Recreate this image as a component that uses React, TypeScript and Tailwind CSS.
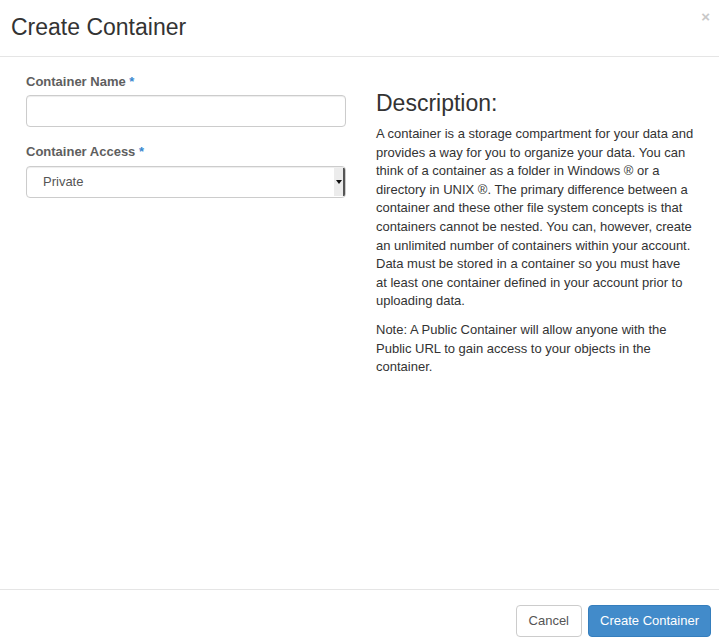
import React from 'react';

const font = { fontFamily: '"Liberation Sans", Arial, sans-serif' };

const App: React.FC = () => {
  return (
    <div className="w-[719px] h-[642px] bg-white flex flex-col text-[#333]" style={font}>
      {/* header */}
      <div className="h-[57px] border-b border-[#e5e5e5] flex items-center justify-between pl-[11px] pr-[9px]">
        <h3 className="text-[23px] leading-none mb-[2px]">Create Container</h3>
        <span className="text-[15px] font-bold text-[#c8c8c8] self-start mt-[9px] leading-none">×</span>
      </div>

      {/* body */}
      <div className="flex-1 flex pl-[26px] pt-[16px]">
        <div className="w-[320px] flex flex-col">
          <label className="text-[13px] font-bold text-[#5e5e5e] leading-[18px] mb-[4px]">
            Container Name <span className="text-[#3a87cf]">*</span>
          </label>
          <input
            type="text"
            className="h-[32px] w-full rounded-[4px] border border-[#ccc] shadow-[inset_0_1px_1px_rgba(0,0,0,0.075)] px-3 text-[13px] outline-none"
          />
          <label className="text-[13px] font-bold text-[#5e5e5e] leading-[18px] mt-[16px] mb-[5px]">
            Container Access <span className="text-[#3a87cf]">*</span>
          </label>
          <div className="h-[32px] w-full rounded-[4px] border border-[#ccc] shadow-[inset_0_1px_1px_rgba(0,0,0,0.075)] flex items-stretch overflow-hidden">
            <span className="flex-1 flex items-center pl-[16px] text-[13px] text-[#555]">Private</span>
            <span className="w-[11px] my-[1px] bg-[#ececec] border-r-2 border-[#555] flex items-center justify-center">
              <svg width="6" height="4" viewBox="0 0 6 4">
                <path d="M0 0h6L3 4z" fill="#111" />
              </svg>
            </span>
          </div>
        </div>

        <div className="ml-[30px] w-[318px] pt-[18px]">
          <h3 className="text-[23px] leading-[24px] mb-[10px]">Description:</h3>
          <p className="text-[13px] leading-[18.6px] mb-[10px]">
            A container is a storage compartment for your data and provides a way for you to organize your
            data. You can think of a container as a folder in Windows ® or a directory in UNIX ®. The primary
            difference between a container and these other file system concepts is that containers cannot be
            nested. You can, however, create an unlimited number of containers within your account. Data must
            be stored in a container so you must have at least one container defined in your account prior to
            uploading data.
          </p>
          <p className="text-[13px] leading-[18.6px]">
            Note: A Public Container will allow anyone with the Public URL to gain access to your objects in
            the container.
          </p>
        </div>
      </div>

      {/* footer */}
      <div className="border-t border-[#e5e5e5] flex justify-end gap-[6px] pt-[15px] pb-[5px] pr-[8px]">
        <button className="h-[32px] px-[12px] rounded-[4px] border border-[#ccc] bg-white text-[13px] text-[#555]">
          Cancel
        </button>
        <button className="h-[32px] px-[11px] rounded-[4px] border border-[#357ebd] bg-[#428bca] text-[13px] text-white">
          Create Container
        </button>
      </div>
    </div>
  );
};

export default App;
